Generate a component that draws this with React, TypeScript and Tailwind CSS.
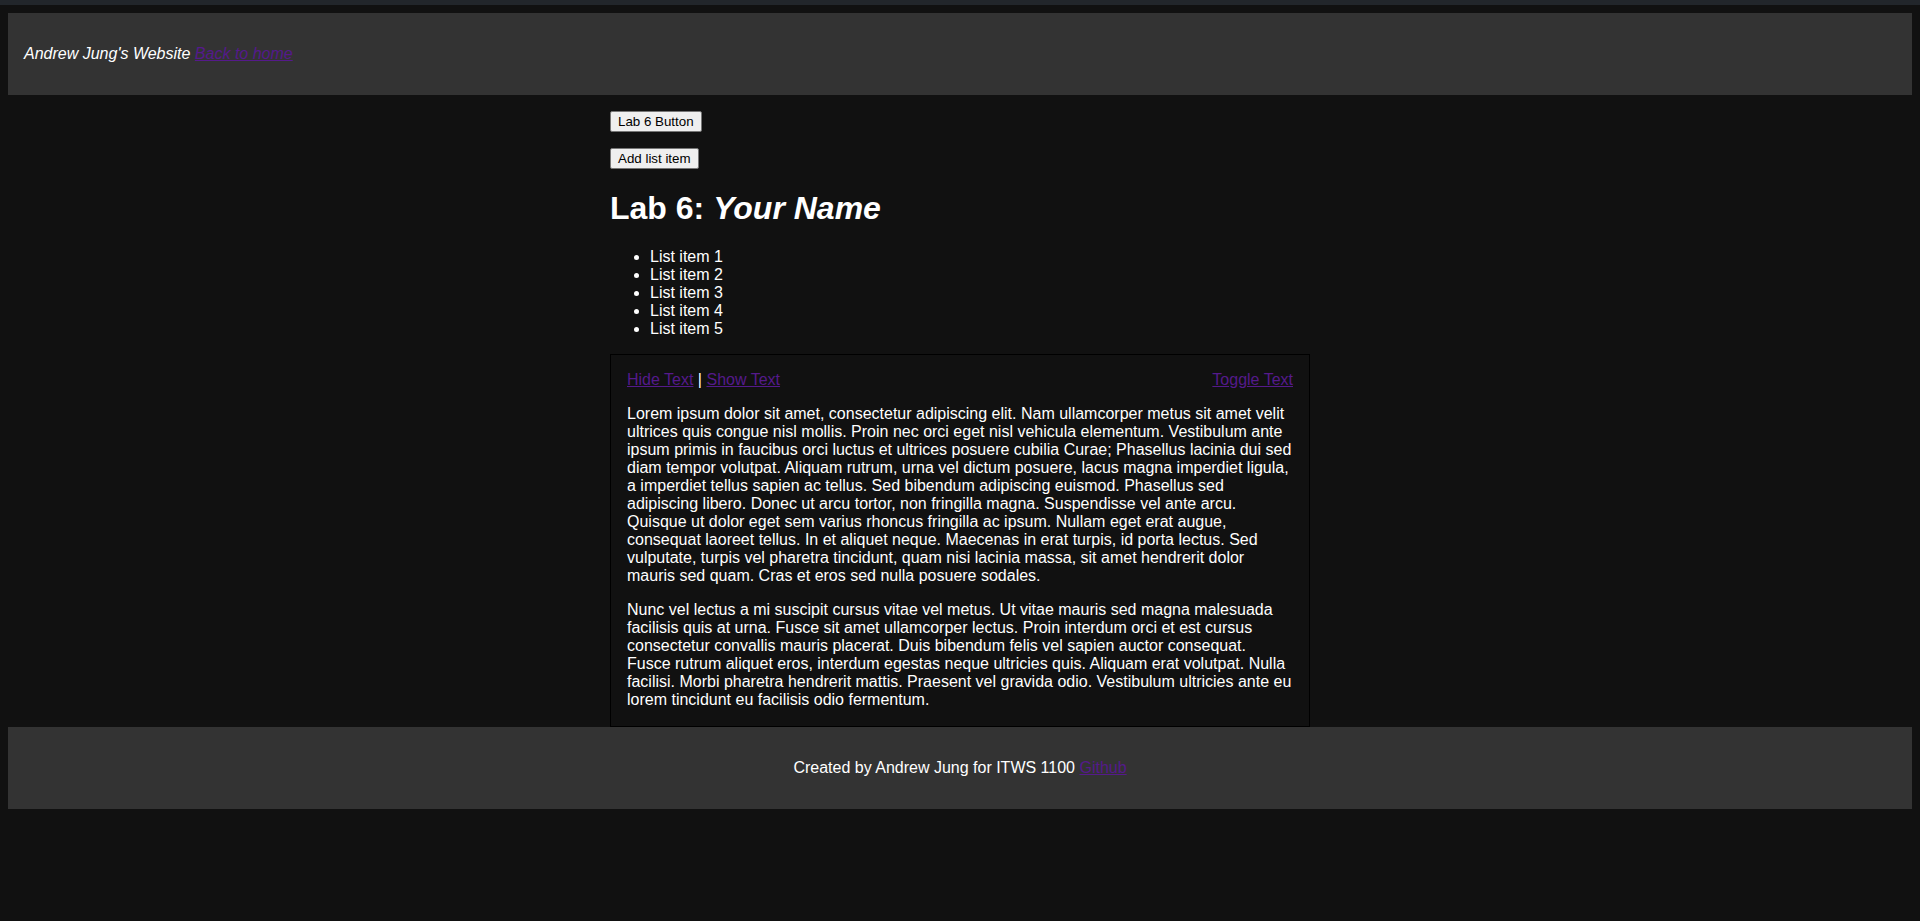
import React from "react"

const para1 =
  "Lorem ipsum dolor sit amet, consectetur adipiscing elit. Nam ullamcorper metus sit amet velit ultrices quis congue nisl mollis. Proin nec orci eget nisl vehicula elementum. Vestibulum ante ipsum primis in faucibus orci luctus et ultrices posuere cubilia Curae; Phasellus lacinia dui sed diam tempor volutpat. Aliquam rutrum, urna vel dictum posuere, lacus magna imperdiet ligula, a imperdiet tellus sapien ac tellus. Sed bibendum adipiscing euismod. Phasellus sed adipiscing libero. Donec ut arcu tortor, non fringilla magna. Suspendisse vel ante arcu. Quisque ut dolor eget sem varius rhoncus fringilla ac ipsum. Nullam eget erat augue, consequat laoreet tellus. In et aliquet neque. Maecenas in erat turpis, id porta lectus. Sed vulputate, turpis vel pharetra tincidunt, quam nisi lacinia massa, sit amet hendrerit dolor mauris sed quam. Cras et eros sed nulla posuere sodales."

const para2 =
  "Nunc vel lectus a mi suscipit cursus vitae vel metus. Ut vitae mauris sed magna malesuada facilisis quis at urna. Fusce sit amet ullamcorper lectus. Proin interdum orci et est cursus consectetur convallis mauris placerat. Duis bibendum felis vel sapien auctor consequat. Fusce rutrum aliquet eros, interdum egestas neque ultricies quis. Aliquam erat volutpat. Nulla facilisi. Morbi pharetra hendrerit mattis. Praesent vel gravida odio. Vestibulum ultricies ante eu lorem tincidunt eu facilisis odio fermentum."

const linkCls = "text-[#551a8b] underline cursor-pointer"

const LabButton = ({ label }: { label: string }) => (
  <button className="h-[21px] px-[7px] bg-[#efefef] border border-[#767676] rounded-[2px] text-[13.33px] leading-[15px] text-black font-['Arial','Liberation_Sans',sans-serif]">
    {label}
  </button>
)

export default function App() {
  const items = [1, 2, 3, 4, 5]
  return (
    <div className="min-h-screen bg-[#111111] text-white text-[16px] leading-[18px] font-['Arial','Liberation_Sans',sans-serif]">
      <div className="h-[5px] bg-[#22262b]" />
      <div className="px-2 pt-2">
        {/* header */}
        <header className="h-[82px] bg-[#333333] px-4 flex items-center italic">
          <span>Andrew Jung's Website</span>
          <span>&nbsp;</span>
          <a className={linkCls}>Back to home</a>
        </header>

        <main className="w-[700px] mx-auto pt-4">
          <div className="flex flex-col items-start gap-4">
            <LabButton label="Lab 6 Button" />
            <LabButton label="Add list item" />
          </div>

          <h1 className="mt-[21px] mb-[21px] text-[32px] leading-[37px] font-bold">
            Lab 6: <em>Your Name</em>
          </h1>

          <ul className="list-disc pl-10 mb-4">
            {items.map((n) => (
              <li key={n}>List item {n}</li>
            ))}
          </ul>

          <div className="border border-black px-4 pt-4 pb-[17px]">
            <div className="flex justify-between mb-4">
              <div>
                <a className={linkCls}>Hide Text</a> | <a className={linkCls}>Show Text</a>
              </div>
              <a className={linkCls}>Toggle Text</a>
            </div>
            <p className="mb-4">{para1}</p>
            <p>{para2}</p>
          </div>
        </main>

        {/* footer */}
        <footer className="h-[82px] bg-[#333333] flex items-center justify-center">
          <span>Created by Andrew Jung for ITWS 1100&nbsp;</span>
          <a className={linkCls}>Github</a>
        </footer>
      </div>
    </div>
  )
}
